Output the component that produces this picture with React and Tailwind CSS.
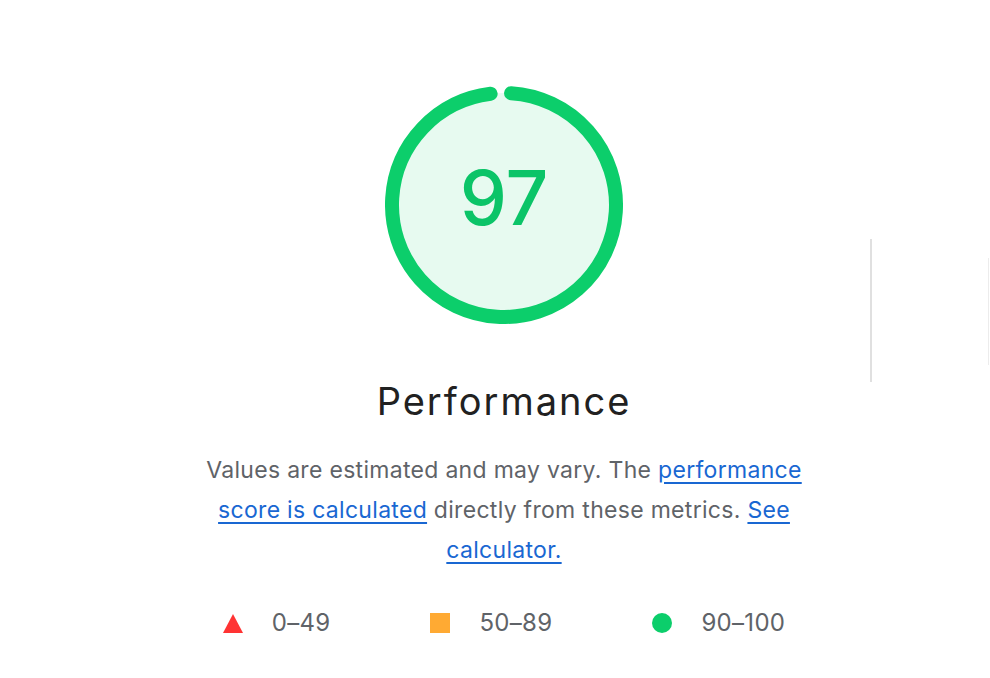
import React from 'react';

const R = 112;
const C = 2 * Math.PI * R;

function Gauge({ score }) {
    return (
        <div className="relative w-[238px] h-[238px]">
            <svg width="238" height="238" viewBox="0 0 238 238">
                <circle cx="119" cy="119" r={R} fill="#e7faf0" />
                <circle
                    cx="119"
                    cy="119"
                    r={R}
                    fill="none"
                    stroke="#0cce6b"
                    strokeWidth="14"
                    strokeLinecap="round"
                    strokeDasharray={`${(score / 100) * C} ${C}`}
                    transform="rotate(-86.4 119 119)"
                />
            </svg>
            <div className="absolute inset-0 flex items-center justify-center pb-[15px]">
                <span className="text-[75px] leading-none font-medium text-[#0bc468]">{score}</span>
            </div>
        </div>
    );
}

function LegendItem({ icon, label }) {
    return (
        <div className="flex items-center gap-[29px]">
            {icon}
            <span>{label}</span>
        </div>
    );
}

export default function App() {
    return (
        <div className="flex w-[990px] h-[678px] overflow-hidden bg-white font-['Inter',sans-serif]">
            <div className="ml-[194px] w-[620px] shrink-0 flex flex-col items-center pt-[86px]">
                <Gauge score={97} />
                <h2 className="mt-[55px] text-[38px] leading-[44px] tracking-[2px] text-[#212121]">Performance</h2>
                <p className="mt-[27px] text-[23px] leading-[40px] tracking-[0.3px] text-[#5f6368] text-center">
                    Values are estimated and may vary. The{' '}
                    <a href="#" className="text-[#1967d2] underline decoration-2 underline-offset-[4px]">
                        performance score is calculated
                    </a>{' '}
                    directly from these metrics.{' '}
                    <a href="#" className="text-[#1967d2] underline decoration-2 underline-offset-[4px]">
                        See calculator.
                    </a>
                </p>
                <div className="mt-[35px] flex items-center gap-[100px] text-[24px] tracking-[0.3px] text-[#5f6368]">
                    <LegendItem
                        label="0–49"
                        icon={
                            <svg width="20" height="19" viewBox="0 0 20 19">
                                <polygon points="10,0 20,19 0,19" fill="#ff3333" />
                            </svg>
                        }
                    />
                    <LegendItem label="50–89" icon={<span className="block w-[20px] h-[20px] bg-[#ffaa33]" />} />
                    <LegendItem label="90–100" icon={<span className="block w-[20px] h-[20px] rounded-full bg-[#0cce6b]" />} />
                </div>
            </div>
            <div className="ml-[56px] mt-[239px] w-[2px] h-[143px] shrink-0 bg-[#e0e0e0]" />
            <div className="ml-[116px] mt-[258px] w-px h-[107px] shrink-0 bg-[#ececec]" />
        </div>
    );
}
